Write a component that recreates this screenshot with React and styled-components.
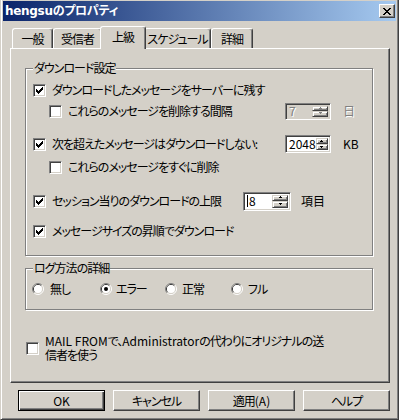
import React from 'react';
import styled, { createGlobalStyle } from 'styled-components';

const FACE = `"Liberation Sans Narrow", "Noto Sans CJK JP", sans-serif`;
const FACE_BOLD = `"DejaVu Sans", "Noto Sans CJK JP", sans-serif`;

const Global = createGlobalStyle`
  html, body { margin: 0; padding: 0; background: #D4D0C8; }
  body {
    font-family: ${FACE};
    font-size: 12px;
    line-height: 14px;
    letter-spacing: -1px;
    color: #000;
    font-feature-settings: "palt";
  }
  * { box-sizing: border-box; }
`;

const Window = styled.div`
  width: 399px;
  height: 420px;
  display: flex;
  flex-direction: column;
  background: #D4D0C8;
  border-style: solid;
  border-width: 0 1px 1px 1px;
  border-color: #404040 #404040 #404040 #D4D0C8;
  box-shadow: inset 1px 0 0 #fff, inset -1px -1px 0 #808080;
  padding: 0 2px 2px 2px;
`;

const TitleBar = styled.div`
  margin-top: 1px;
  height: 20px;
  display: flex;
  align-items: center;
  justify-content: space-between;
  padding: 0 1px 0 2px;
  background: linear-gradient(to right, #0A246A, #A6CAF0);
`;

const TitleText = styled.span`
  color: #fff;
  font-family: ${FACE_BOLD};
  font-weight: bold;
  font-size: 12px;
  letter-spacing: -0.3px;
  white-space: nowrap;
`;

const CloseBtn = styled.span`
  width: 16px;
  height: 14px;
  display: flex;
  align-items: center;
  justify-content: center;
  background: #D4D0C8;
  border: 1px solid;
  border-color: #fff #404040 #404040 #fff;
  box-shadow: inset -1px -1px 0 #808080;
`;

const Body = styled.div`
  display: flex;
  flex-direction: column;
  padding: 5px 5px 0 7px;
`;

const TabRow = styled.div`
  display: flex;
  align-items: flex-end;
  height: 22px;
  padding-left: 2px;
`;

const Tab = styled.div`
  position: relative;
  z-index: ${p => (p.$active ? 1 : 0)};
  width: ${p => p.$w + (p.$active ? 4 : 0)}px;
  height: ${p => (p.$active ? 23 : 20)}px;
  margin: 0 ${p => (p.$active ? -2 : 0)}px ${p => (p.$active ? -1 : 0)}px;
  padding-bottom: ${p => (p.$active ? 3 : 0)}px;
  display: flex;
  align-items: center;
  justify-content: center;
  white-space: nowrap;
  background: #D4D0C8;
  border-top: 1px solid #fff;
  border-left: 1px solid #fff;
  border-right: 1px solid #404040;
  box-shadow: inset -1px 0 0 #808080;
  border-radius: 3px 3px 0 0;
`;

const Panel = styled.div`
  width: 380px;
  height: 335px;
  display: flex;
  flex-direction: column;
  align-items: flex-start;
  border: 1px solid;
  border-color: #fff #404040 #404040 #fff;
  box-shadow: inset -1px -1px 0 #808080;
  padding: 12px 0 0 14px;
`;

const Group = styled.fieldset`
  margin: ${p => p.$mt || 0}px 0 0 0;
  padding: ${p => p.$pt}px 0 ${p => p.$pb}px 7px;
  width: 348px;
  min-width: 0;
  border: 1px solid #808080;
  box-shadow: 1px 1px 0 #fff, inset 1px 1px 0 #fff;
`;

const Legend = styled.legend`
  padding: 0 1px;
  line-height: 14px;
  background: #D4D0C8;
`;

const Row = styled.div`
  display: flex;
  align-items: center;
  height: 18px;
  margin-top: ${p => p.$mt || 0}px;
`;

const Option = styled.label`
  display: flex;
  align-items: center;
  gap: 6px;
  flex: none;
  width: ${p => (p.$w ? `${p.$w}px` : 'auto')};
  padding-left: ${p => (p.$indent ? 16 : 0)}px;
  white-space: nowrap;
`;

const Latin = styled.span`
  letter-spacing: 0;
`;

const Box = styled.span`
  width: 13px;
  height: 13px;
  flex: none;
  display: inline-flex;
  align-items: center;
  justify-content: center;
  background: #fff;
  border: 1px solid;
  border-color: #808080 #fff #fff #808080;
  box-shadow: inset 1px 1px 0 #404040, inset -1px -1px 0 #D4D0C8;
`;

const Spin = styled.div`
  display: flex;
  width: ${p => p.$w}px;
  height: ${p => p.$h}px;
  border: 1px solid;
  border-color: #808080 #fff #fff #808080;
  box-shadow: inset 1px 1px 0 #404040, inset -1px -1px 0 #D4D0C8;
  background: ${p => (p.$disabled ? '#D4D0C8' : '#fff')};
  padding: 2px;
`;

const SpinText = styled.span`
  flex: 1;
  display: flex;
  align-items: center;
  padding-left: 1px;
  letter-spacing: 0;
  color: ${p => (p.$disabled ? '#808080' : '#000')};
  text-shadow: ${p => (p.$disabled ? '1px 1px 0 #fff' : 'none')};
`;

const Caret = styled.span`
  width: 1px;
  height: 12px;
  background: #000;
  margin-right: 1px;
`;

const SpinButtons = styled.div`
  display: flex;
  flex-direction: column;
  width: 16px;
`;

const SpinBtn = styled.span`
  flex: 1;
  display: flex;
  align-items: center;
  justify-content: center;
  background: #D4D0C8;
  border: 1px solid;
  border-color: #D4D0C8 #404040 #404040 #D4D0C8;
  box-shadow: inset 1px 1px 0 #fff, inset -1px -1px 0 #808080;
`;

const Unit = styled.span`
  margin-left: ${p => p.$ml}px;
  letter-spacing: 0;
  color: ${p => (p.$disabled ? '#808080' : '#000')};
  text-shadow: ${p => (p.$disabled ? '1px 1px 0 #fff' : 'none')};
`;

const RadioRow = styled.div`
  display: grid;
  grid-template-columns: 68px 65px 66px auto;
  align-items: center;
  height: 14px;
  margin-left: -1px;
`;

const RadioOpt = styled.label`
  display: flex;
  align-items: center;
  gap: ${p => p.$gap}px;
  white-space: nowrap;
`;

const RadioSvg = styled.svg`
  width: 12px;
  height: 12px;
  flex: none;
`;

const Footer = styled.label`
  display: flex;
  align-items: center;
  gap: 6px;
  margin: 24px 0 0 1px;
  line-height: 14px;
`;

const ButtonRow = styled.div`
  display: flex;
  gap: 8px;
  margin-top: 7px;
  padding-left: 8px;
`;

const Btn = styled.button`
  width: 87px;
  height: 21px;
  padding: 0;
  font-family: ${FACE};
  font-size: 12px;
  letter-spacing: -1px;
  font-feature-settings: "palt";
  color: #000;
  background: #D4D0C8;
  border: 1px solid;
  border-color: ${p => (p.$default ? '#000' : '#fff #404040 #404040 #fff')};
  box-shadow: ${p =>
    p.$default
      ? 'inset 1px 1px 0 #fff, inset -1px -1px 0 #404040, inset -2px -2px 0 #808080'
      : 'inset -1px -1px 0 #808080'};
`;

const Check = () => (
  <svg width="7" height="7" viewBox="0 0 7 7" shapeRendering="crispEdges">
    <path
      fill="#000"
      d="M6 0h1v1h-1z M5 1h2v1h-2z M0 2h1v1h-1z M4 2h3v1h-3z M0 3h2v1h-2z M3 3h3v1h-3z M0 4h5v1h-5z M1 5h3v1h-3z M2 6h1v1h-1z"
    />
  </svg>
);

const CheckBox = ({ checked }) => <Box>{checked && <Check />}</Box>;

const Radio = ({ checked }) => (
  <RadioSvg viewBox="0 0 12 12">
    <path d="M2.11 9.89 A5.5 5.5 0 0 1 9.89 2.11" fill="none" stroke="#808080" />
    <path d="M9.89 2.11 A5.5 5.5 0 0 1 2.11 9.89" fill="none" stroke="#fff" />
    <path d="M2.82 9.18 A4.5 4.5 0 0 1 9.18 2.82" fill="none" stroke="#404040" />
    <path d="M9.18 2.82 A4.5 4.5 0 0 1 2.82 9.18" fill="none" stroke="#D4D0C8" />
    <circle cx="6" cy="6" r="4" fill="#fff" />
    {checked && <circle cx="6" cy="6" r="2" fill="#000" />}
  </RadioSvg>
);

const Arrow = ({ up, color }) => (
  <svg width="5" height="3" viewBox="0 0 5 3" shapeRendering="crispEdges">
    <path fill={color} d={up ? 'M2 0h1v1h-1z M1 1h3v1h-3z' : 'M1 0h3v1h-3z M2 1h1v1h-1z'} />
  </svg>
);

const Spinner = ({ value, w, h, disabled, caret }) => (
  <Spin $w={w} $h={h} $disabled={disabled}>
    <SpinText $disabled={disabled}>
      {caret && <Caret />}
      {value}
    </SpinText>
    <SpinButtons>
      <SpinBtn>
        <Arrow up color={disabled ? '#808080' : '#000'} />
      </SpinBtn>
      <SpinBtn>
        <Arrow color={disabled ? '#808080' : '#000'} />
      </SpinBtn>
    </SpinButtons>
  </Spin>
);

const CloseX = () => (
  <svg width="8" height="7" viewBox="0 0 8 7" shapeRendering="crispEdges">
    <path
      fill="#000"
      d="M0 0h2v1h-2z M6 0h2v1h-2z M1 1h2v1h-2z M5 1h2v1h-2z M2 2h4v1h-4z M3 3h2v1h-2z M2 4h4v1h-4z M1 5h2v1h-2z M5 5h2v1h-2z M0 6h2v1h-2z M6 6h2v1h-2z"
    />
  </svg>
);

const tabs = [
  { label: '一般', w: 41 },
  { label: '受信者', w: 49 },
  { label: '上級', w: 42, active: true },
  { label: 'スケジュール', w: 67 },
  { label: '詳細', w: 42 },
];

const radios = [
  { label: '無し', gap: 6 },
  { label: 'エラー', gap: 4, checked: true },
  { label: '正常', gap: 5 },
  { label: 'フル', gap: 5 },
];

export default function App() {
  return (
    <>
      <Global />
      <Window>
        <TitleBar>
          <TitleText>hengsuのプロパティ</TitleText>
          <CloseBtn>
            <CloseX />
          </CloseBtn>
        </TitleBar>
        <Body>
          <TabRow>
            {tabs.map(t => (
              <Tab key={t.label} $w={t.w} $active={t.active}>
                {t.label}
              </Tab>
            ))}
          </TabRow>
          <Panel>
            <Group $pt={6} $pb={15}>
              <Legend>ダウンロード設定</Legend>
              <Row>
                <Option>
                  <CheckBox checked />
                  ダウンロードしたメッセージをサーバーに残す
                </Option>
              </Row>
              <Row $mt={3}>
                <Option $indent $w={252}>
                  <CheckBox />
                  これらのメッセージを削除する間隔
                </Option>
                <Spinner value="7" w={46} h={17} disabled />
                <Unit $ml={12} $disabled>日</Unit>
              </Row>
              <Row $mt={15}>
                <Option $w={252}>
                  <CheckBox checked />
                  次を超えたメッセージはダウンロードしない:
                </Option>
                <Spinner value="2048" w={46} h={18} />
                <Unit $ml={12}>KB</Unit>
              </Row>
              <Row $mt={5}>
                <Option $indent>
                  <CheckBox />
                  これらのメッセージをすぐに削除
                </Option>
              </Row>
              <Row $mt={16}>
                <Option $w={210}>
                  <CheckBox checked />
                  セッション当りのダウンロードの上限
                </Option>
                <Spinner value="8" w={48} h={19} caret />
                <Unit $ml={10}>項目</Unit>
              </Row>
              <Row $mt={12}>
                <Option>
                  <CheckBox checked />
                  メッセージサイズの昇順でダウンロード
                </Option>
              </Row>
            </Group>
            <Group $mt={5} $pt={7} $pb={13}>
              <Legend>ログ方法の詳細</Legend>
              <RadioRow>
                {radios.map(r => (
                  <RadioOpt key={r.label} $gap={r.gap}>
                    <Radio checked={r.checked} />
                    {r.label}
                  </RadioOpt>
                ))}
              </RadioRow>
            </Group>
            <Footer>
              <CheckBox />
              <span>
                <Latin>MAIL FROM</Latin>で、<Latin>Administrator</Latin>の代わりにオリジナルの送
                <br />
                信者を使う
              </span>
            </Footer>
          </Panel>
          <ButtonRow>
            <Btn $default>
              <Latin>OK</Latin>
            </Btn>
            <Btn>キャンセル</Btn>
            <Btn>
              適用<Latin>(A)</Latin>
            </Btn>
            <Btn>ヘルプ</Btn>
          </ButtonRow>
        </Body>
      </Window>
    </>
  );
}
